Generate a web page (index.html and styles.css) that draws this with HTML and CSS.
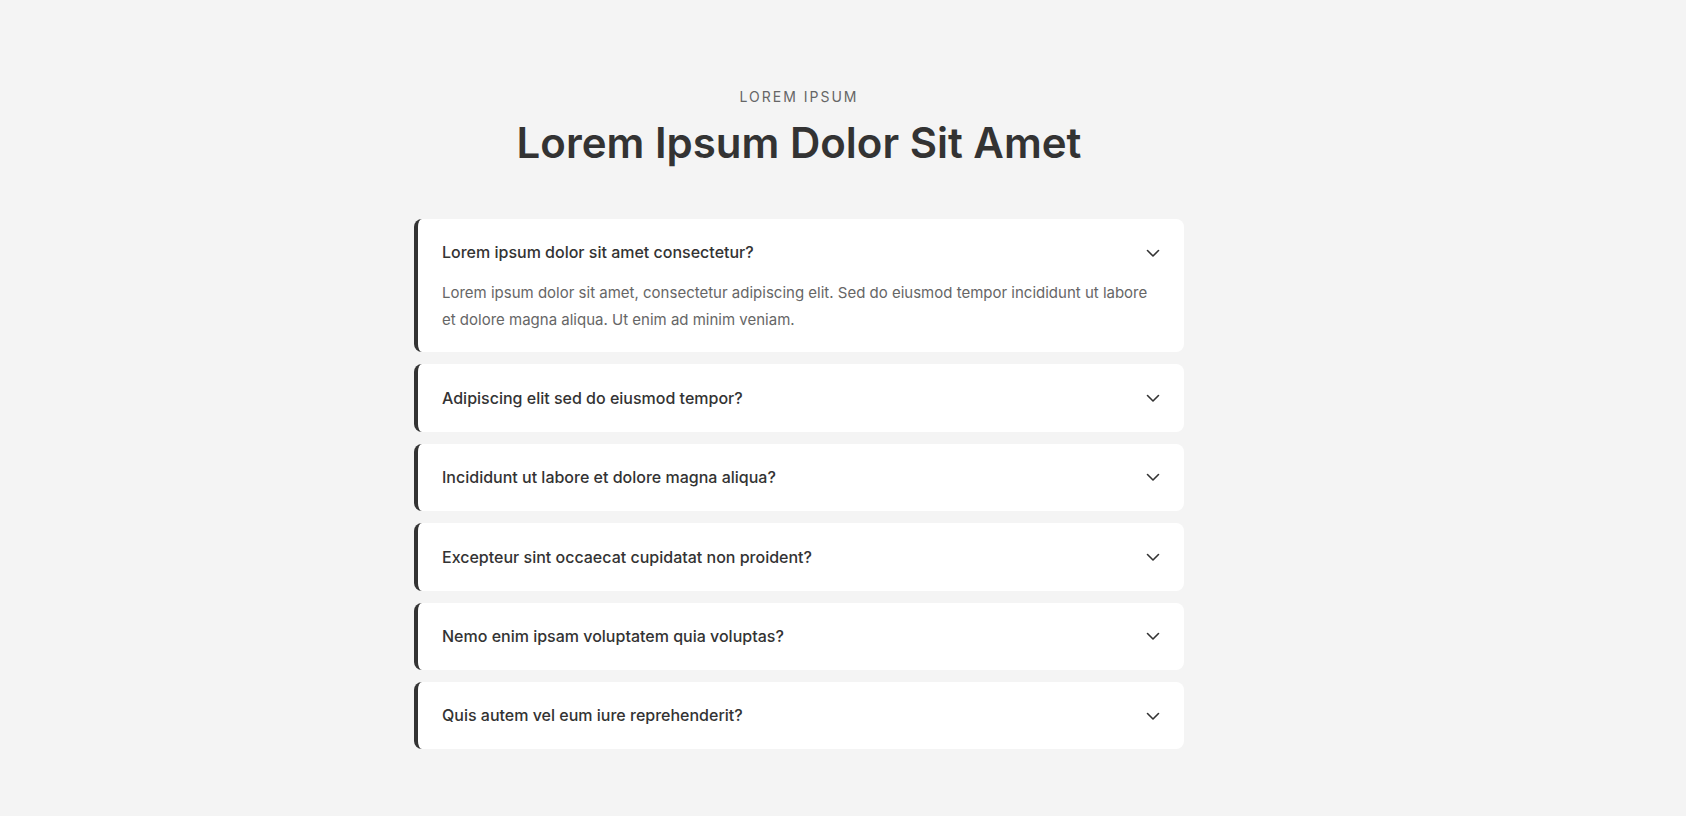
FILE: index.html
```html
<!DOCTYPE html>
<html lang="en">
<head>
<meta charset="utf-8">
<title>FAQ</title>
<link rel="stylesheet" href="styles.css">
</head>
<body>
<main class="page">
  <section class="faq">
    <header class="faq-head">
      <p class="eyebrow">LOREM IPSUM</p>
      <h1 class="title">Lorem Ipsum Dolor Sit Amet</h1>
    </header>
    <div class="list">
      <div class="item open">
        <div class="q">
          <span>Lorem ipsum dolor sit amet consectetur?</span>
          <svg class="chev" viewBox="0 0 16 16" width="16" height="16"><path d="M2.5 5.5 8 11l5.5-5.5"/></svg>
        </div>
        <p class="a">Lorem ipsum dolor sit amet, consectetur adipiscing elit. Sed do eiusmod tempor incididunt ut labore et dolore magna aliqua. Ut enim ad minim veniam.</p>
      </div>
      <div class="item">
        <div class="q">
          <span>Adipiscing elit sed do eiusmod tempor?</span>
          <svg class="chev" viewBox="0 0 16 16" width="16" height="16"><path d="M2.5 5.5 8 11l5.5-5.5"/></svg>
        </div>
      </div>
      <div class="item">
        <div class="q">
          <span>Incididunt ut labore et dolore magna aliqua?</span>
          <svg class="chev" viewBox="0 0 16 16" width="16" height="16"><path d="M2.5 5.5 8 11l5.5-5.5"/></svg>
        </div>
      </div>
      <div class="item">
        <div class="q">
          <span>Excepteur sint occaecat cupidatat non proident?</span>
          <svg class="chev" viewBox="0 0 16 16" width="16" height="16"><path d="M2.5 5.5 8 11l5.5-5.5"/></svg>
        </div>
      </div>
      <div class="item">
        <div class="q">
          <span>Nemo enim ipsam voluptatem quia voluptas?</span>
          <svg class="chev" viewBox="0 0 16 16" width="16" height="16"><path d="M2.5 5.5 8 11l5.5-5.5"/></svg>
        </div>
      </div>
      <div class="item">
        <div class="q">
          <span>Quis autem vel eum iure reprehenderit?</span>
          <svg class="chev" viewBox="0 0 16 16" width="16" height="16"><path d="M2.5 5.5 8 11l5.5-5.5"/></svg>
        </div>
      </div>
    </div>
  </section>
</main>
</body>
</html>
```
FILE: styles.css
```css
* { box-sizing: border-box; }
html, body { margin: 0; padding: 0; }
body {
  background: #f4f4f4;
  font-family: Inter, "Noto Sans", sans-serif;
  color: #333;
}
.page {
  width: 1598px;
  padding-top: 87px;
}
.faq {
  width: 770px;
  margin: 0 auto;
}
.faq-head {
  text-align: center;
  display: flex;
  flex-direction: column;
  align-items: center;
  gap: 11px;
  margin-bottom: 51px;
}
.eyebrow {
  margin: 0;
  font-size: 14px;
  line-height: 20px;
  letter-spacing: 2px;
  color: #666;
  font-weight: 400;
}
.title {
  margin: 0;
  font-size: 42px;
  line-height: 50px;
  font-weight: 600;
  color: #333;
}
.list {
  display: flex;
  flex-direction: column;
  gap: 12px;
}
.item {
  background: #fff;
  border-left: 4px solid #333;
  border-radius: 8px;
}
.q {
  display: flex;
  align-items: center;
  justify-content: space-between;
  padding: 22.4px 23px 22.4px 24px;
  font-size: 16px;
  line-height: 22.6px;
  font-weight: 500;
  color: #333;
}
.chev {
  fill: none;
  stroke: #333;
  stroke-width: 1.6;
  stroke-linecap: round;
  stroke-linejoin: round;
}
.a {
  margin: -7.5px 0 0;
  padding: 0 24px 19.5px;
  font-size: 15px;
  line-height: 27px;
  color: #666;
}
```
